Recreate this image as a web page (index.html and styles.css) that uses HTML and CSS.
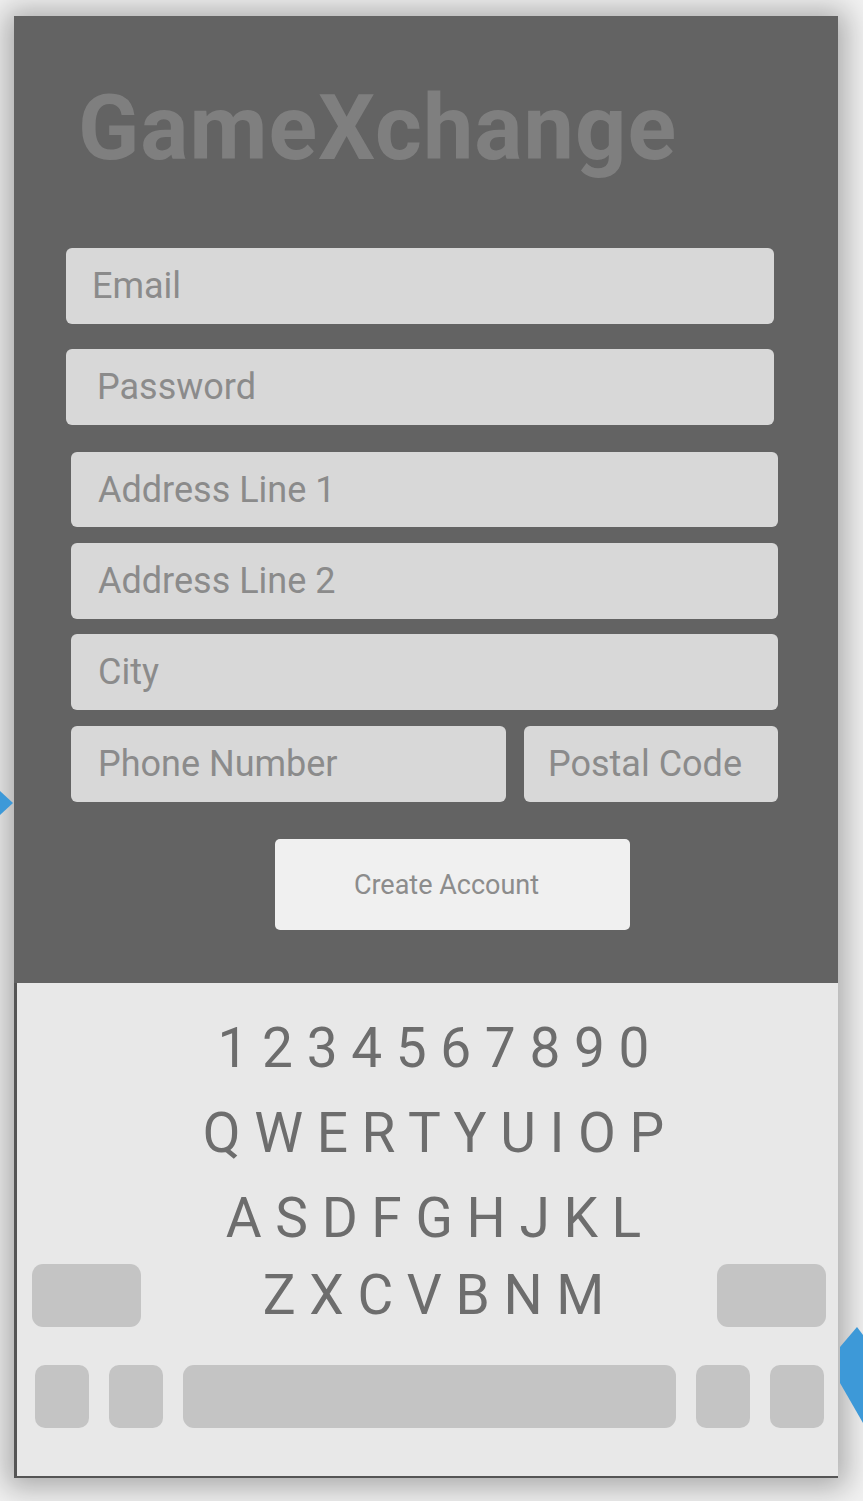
FILE: index.html
```html
<!DOCTYPE html>
<html lang="en">
<head>
<meta charset="utf-8">
<title>GameXchange - Create Account</title>
<link rel="stylesheet" href="styles.css">
</head>
<body>
<div class="screen">
  <div class="top">
    <h1 class="title">GameXchange</h1>
    <div class="form">
      <div class="field field-a">Email</div>
      <div class="field field-a field-pw">Password</div>
      <div class="field field-b field-addr1">Address Line 1</div>
      <div class="field field-b field-addr2">Address Line 2</div>
      <div class="field field-b field-city">City</div>
      <div class="pair">
        <div class="field field-phone">Phone Number</div>
        <div class="field field-postal">Postal Code</div>
      </div>
      <div class="btn">Create Account</div>
    </div>
  </div>
  <div class="kb">
    <div class="row row-num">1 2 3 4 5 6 7 8 9 0</div>
    <div class="row">Q W E R T Y U I O P</div>
    <div class="row">A S D F G H J K L</div>
    <div class="row-z">
      <div class="key key-wide"></div>
      <div class="row-z-text">Z X C V B N M</div>
      <div class="key key-wide"></div>
    </div>
    <div class="row-bottom">
      <div class="key key-sm"></div>
      <div class="key key-sm"></div>
      <div class="key key-space"></div>
      <div class="key key-sm"></div>
      <div class="key key-sm"></div>
    </div>
  </div>
</div>
<svg class="arrow arrow-left" width="14" height="30" viewBox="0 0 14 30"><polygon points="0,3 13,15 0,27" fill="#3d99d8"/></svg>
<svg class="arrow arrow-right" width="24" height="100" viewBox="0 0 24 100"><polygon points="18,0 24,8 24,96 1,56 1,20" fill="#3d99d8"/></svg>
</body>
</html>
```

FILE: styles.css
```css
html, body {
  margin: 0;
  padding: 0;
}
body {
  background: #f2f2f2;
  width: 863px;
  height: 1501px;
  overflow: hidden;
  position: relative;
  padding: 16px 0 0 14px;
  box-sizing: border-box;
  font-family: Roboto, "Liberation Sans", sans-serif;
}
.screen {
  width: 824px;
  box-shadow: 0 2px 28px 8px rgba(0, 0, 0, 0.3);
}
.top {
  height: 967px;
  background: #636363;
  padding-top: 68px;
  box-sizing: border-box;
}
.title {
  margin: 0;
  padding-left: 64px;
  font-size: 90px;
  line-height: 90px;
  font-weight: 700;
  color: #7f7f7f;
  letter-spacing: 1px;
}
.form {
  margin-top: 74px;
  display: flex;
  flex-direction: column;
}
.field {
  box-sizing: border-box;
  height: 76px;
  background: #d8d8d8;
  border-radius: 6px;
  display: flex;
  align-items: center;
  padding-left: 27px;
  font-size: 36px;
  color: #8b8b8b;
}
.field-a {
  margin-left: 52px;
  width: 708px;
  padding-left: 26px;
}
.field-pw {
  margin-top: 25px;
  padding-left: 31px;
}
.field-b {
  margin-left: 57px;
  width: 707px;
}
.field-addr1 {
  margin-top: 27px;
  height: 75px;
}
.field-addr2 {
  margin-top: 16px;
}
.field-city {
  margin-top: 15px;
}
.pair {
  margin-top: 16px;
  margin-left: 57px;
  display: flex;
  gap: 18px;
}
.field-phone {
  width: 435px;
}
.field-postal {
  width: 254px;
  padding-left: 24px;
}
.btn {
  margin-top: 37px;
  margin-left: 261px;
  width: 355px;
  height: 91px;
  background: #f0f0f0;
  border-radius: 5px;
  display: flex;
  align-items: center;
  justify-content: center;
  font-size: 27px;
  color: #8c8c8c;
  padding-right: 12px;
  box-sizing: border-box;
}
.kb {
  height: 495px;
  box-sizing: border-box;
  background: #e8e8e8;
  border-left: 3px solid #555;
  border-bottom: 2px solid #555;
  padding-top: 23px;
  color: #6d6d6d;
}
.row {
  font-size: 55px;
  line-height: 85px;
  height: 85px;
  text-align: center;
  padding-left: 12px;
}
.row-z {
  display: grid;
  grid-template-columns: 109px 1fr 109px;
  padding: 0 12px 0 15px;
  margin-top: 3px;
}
.row-z-text {
  font-size: 55px;
  line-height: 63px;
  height: 63px;
  text-align: center;
  padding-left: 9px;
}
.key {
  background: #c4c4c4;
  height: 63px;
  border-radius: 11px;
}
.row-bottom {
  display: flex;
  gap: 20px;
  margin-top: 38px;
  padding-left: 18px;
}
.key-sm {
  width: 54px;
  border-radius: 10px;
}
.key-space {
  width: 493px;
}
.arrow {
  position: absolute;
  display: block;
}
.arrow-left {
  left: 0;
  top: 788px;
}
.arrow-right {
  left: 839px;
  top: 1327px;
}
```
